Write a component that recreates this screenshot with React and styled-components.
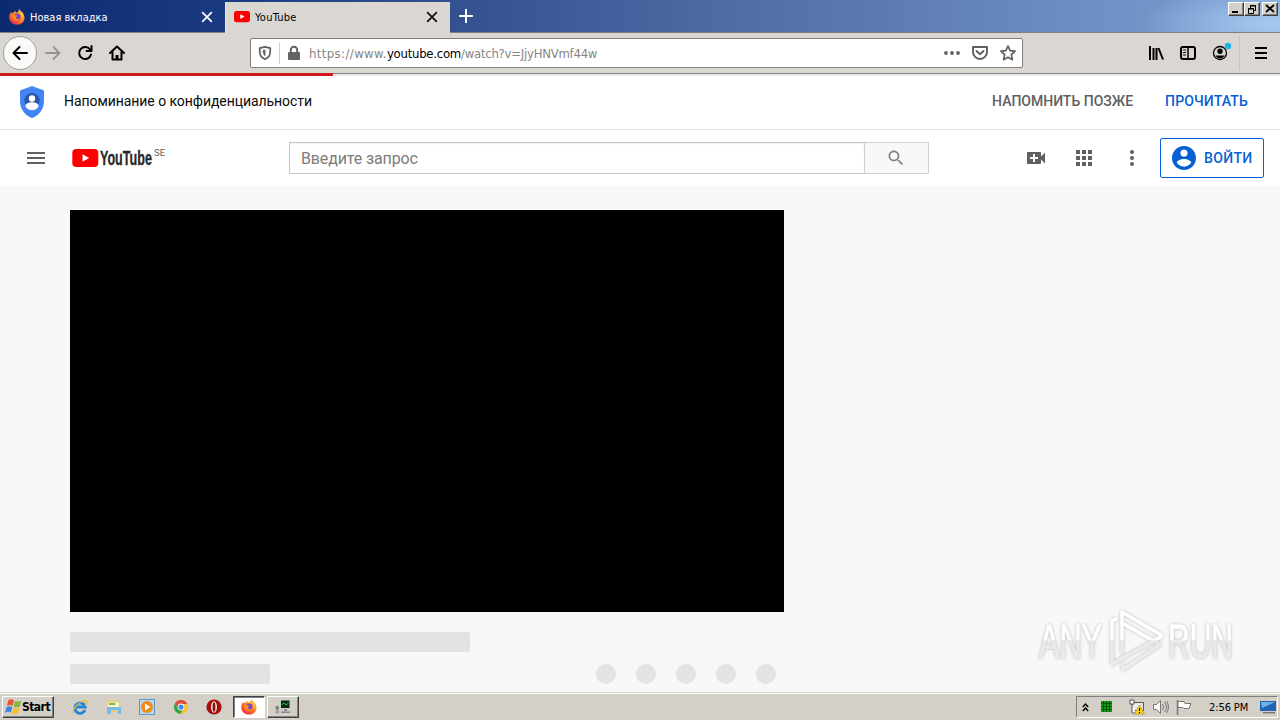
import React from 'react';
import styled, { createGlobalStyle } from 'styled-components';

const GlobalStyle = createGlobalStyle`
    * {
        box-sizing: border-box;
    }
    body {
        margin: 0;
        overflow: hidden;
        background-color: #f8f8f8;
    }
    svg {
        display: block;
        flex-shrink: 0;
        overflow: visible;
    }
`;

const Screen = styled.div`
    width: 1280px;
    height: 720px;
    display: flex;
    flex-direction: column;
    position: relative;
    overflow: hidden;
    font-family: Roboto, "Liberation Sans", sans-serif;
    white-space: nowrap;
`;

/* browser chrome */

const TabStrip = styled.div`
    height: 33px;
    display: flex;
    flex-shrink: 0;
    align-items: flex-end;
    background: radial-gradient(ellipse 130px 40px at 1270px 24px, #a5c9ee, transparent),
        linear-gradient(90deg, #0c2a70 0, #1a3a82 225px, #33508f 450px, #5673ab 800px, #6a8cc2 1060px, #7ba0d2 1280px);
    border-bottom: 1px solid #80807f;
`;

const Tab = styled.div`
    width: ${props => props.$width};
    height: ${props => props.$active ? "31px" : "32px"};
    margin-bottom: ${props => props.$active ? "-1px" : "0"};
    padding: ${props => props.$active ? "0 13px 1px 8px" : "2px 13px 0 9px"};
    display: flex;
    align-items: center;
    gap: 5px;
    color: ${props => props.$active ? "#000" : "#fff"};
    background-color: ${props => props.$active ? "#dad7d2" : "transparent"};
    border-left: ${props => props.$active ? "1px solid #e9e7e3" : "none"};
`;

const TabTitle = styled.span`
    flex: 1;
    font: 11px "DejaVu Sans Condensed", "DejaVu Sans", sans-serif;
    letter-spacing: ${props => props.$spacing};
`;

const NewTab = styled.div`
    height: 32px;
    padding: 0 9px;
    display: flex;
    align-items: center;
`;

const WindowButtons = styled.div`
    height: 32px;
    margin-left: auto;
    padding: 2px 2px 0 0;
    display: flex;
`;

const WindowButton = styled.div`
    width: 16px;
    height: 14px;
    margin-left: ${props => props.$gap || "0"};
    display: flex;
    align-items: center;
    justify-content: center;
    background-color: #d4d0c8;
    border: 1px solid;
    border-color: #fff #404040 #404040 #fff;
    box-shadow: inset -1px -1px #808080;
`;

const NavBar = styled.div`
    height: 41px;
    display: flex;
    flex-shrink: 0;
    align-items: center;
    background-color: #dad7d2;
    border-bottom: 1px solid #8b8985;
`;

const BackButton = styled.div`
    width: 34px;
    height: 34px;
    margin-left: 3px;
    display: flex;
    align-items: center;
    justify-content: center;
    background-color: #f9f9f8;
    border: 1px solid #a19f9b;
    border-radius: 50%;
`;

const NavIcon = styled.div`
    width: 32px;
    display: flex;
    justify-content: center;
    position: relative;
`;

const UrlBar = styled.div`
    width: 773px;
    height: 30px;
    margin-left: 117px;
    padding: 0 6px 0 7px;
    display: flex;
    align-items: center;
    background-color: #fff;
    border: 1px solid #82807d;
    border-radius: 2px;
`;

const UrlDivider = styled.div`
    width: 1px;
    height: 22px;
    margin: 0 7px;
    background-color: #cfcfcf;
`;

const Url = styled.span`
    flex: 1;
    margin-left: 8px;
    color: #858585;
    font: 13px "DejaVu Sans Condensed", "DejaVu Sans", sans-serif;
    font-weight: 200;
    letter-spacing: -0.25px;

    b {
        color: #000;
        font-weight: 400;
        letter-spacing: -0.25px;
    }
`;

const UrlScheme = styled.span`
    letter-spacing: 0.4px;
`;

const UrlActions = styled.div`
    display: flex;
    align-items: center;
    gap: 12px;
`;

const NavTools = styled.div`
    margin-left: auto;
    padding-right: 3px;
    display: flex;
    align-items: center;
`;

const ToolDivider = styled.div`
    width: 1px;
    height: 34px;
    margin: 0 5px 0 3px;
    background-color: #c9c5be;
`;

/* page */

const Progress = styled.div`
    height: 2px;
    flex-shrink: 0;
    background-color: #ebe9e5;
`;

const ProgressFill = styled.div`
    width: 333px;
    height: 3px;
    margin-top: -1px;
    position: relative;
    background-color: #cf1a1c;
`;

const Privacy = styled.div`
    height: 54px;
    padding: 0 32px 2px 20px;
    display: flex;
    flex-shrink: 0;
    align-items: center;
    background-color: #fff;
    border-bottom: 1px solid #e2e2e2;
`;

const PrivacyText = styled.span`
    flex: 1;
    margin-left: 20px;
    padding-bottom: 2px;
    color: #0a0a0a;
    font-size: 14px;
    letter-spacing: -0.06px;
`;

const TextButton = styled.span`
    margin-left: 32px;
    padding-bottom: 2px;
    color: ${props => props.$primary ? "#065fd4" : "#606060"};
    font-size: 14px;
    font-weight: 500;
    letter-spacing: ${props => props.$spacing || "0"};
`;

const Masthead = styled.div`
    height: 56px;
    padding: 0 16px 0 24px;
    display: flex;
    flex-shrink: 0;
    align-items: center;
    background-color: #fff;
`;

const Logo = styled.div`
    width: 94px;
    margin-left: 24px;
`;

const SearchBox = styled.div`
    width: 640px;
    height: 32px;
    margin-left: 123px;
    display: flex;
`;

const SearchField = styled.div`
    flex: 1;
    padding-left: 11px;
    color: #7c7c7c;
    font-size: 16px;
    line-height: 31px;
    letter-spacing: -0.13px;
    border: 1px solid #c6c6c6;
    border-right: none;
    box-shadow: inset 0 1px 2px #eee;
`;

const SearchButton = styled.div`
    width: 65px;
    padding-right: 2px;
    display: flex;
    align-items: center;
    justify-content: center;
    background-color: #f8f8f8;
    border: 1px solid #d0d0d0;
`;

const MastheadTools = styled.div`
    margin-left: auto;
    display: flex;
    align-items: center;
    gap: 24px;
`;

const SignIn = styled.div`
    width: 104px;
    height: 40px;
    margin-left: -8px;
    padding-left: 11px;
    display: flex;
    align-items: center;
    gap: 8px;
    color: #065fd4;
    font-size: 14px;
    font-weight: 500;
    letter-spacing: 0.35px;
    border: 1px solid #065fd4;
    border-radius: 2px;
`;

const Watch = styled.div`
    flex: 1;
    padding: 24px 0 0 70px;
    background-color: #f8f8f8;
`;

const Player = styled.div`
    width: 714px;
    height: 402px;
    background-color: #000;
`;

const SkeletonRow = styled.div`
    width: 706px;
    margin-top: ${props => props.$top};
    display: flex;
    gap: 20px;
`;

const SkeletonBar = styled.div`
    width: ${props => props.$width};
    height: 20px;
    margin-right: auto;
    background-color: #e3e3e3;
    border-radius: 1px;
`;

const SkeletonDot = styled.div`
    width: 20px;
    height: 20px;
    background-color: #e3e3e3;
    border-radius: 50%;
`;

const Watermark = styled.div`
    position: absolute;
    left: 1032px;
    top: 604px;
`;

/* taskbar */

const Taskbar = styled.div`
    height: 28px;
    padding: 2px 2px 1px;
    display: flex;
    flex-shrink: 0;
    align-items: center;
    background-color: #d4d0c8;
    border-top: 1px solid #d4d0c8;
    box-shadow: inset 0 1px #fff;
    color: #000;
    font: 11px "DejaVu Sans Condensed", "DejaVu Sans", sans-serif;
`;

const TaskButton = styled.div`
    width: ${props => props.$width};
    height: 22px;
    margin-right: ${props => props.$gap || "0"};
    display: flex;
    align-items: center;
    justify-content: center;
    font-size: 12px;
    font-weight: 700;
    letter-spacing: -0.5px;
    background-color: ${props => props.$pressed ? "#fff" : "#d4d0c8"};
    border: 1px solid;
    border-color: ${props => props.$pressed ? "#404040 #fff #fff #404040" : "#fff #404040 #404040 #fff"};
    box-shadow: ${props => props.$pressed ? "inset 1px 1px #808080" : "inset -1px -1px #808080"};
`;

const QuickLaunch = styled.div`
    width: 161px;
    margin-left: 18px;
    display: flex;
    gap: 17.5px;
`;

const Tray = styled.div`
    width: 202px;
    height: 22px;
    margin-left: auto;
    padding-left: 5px;
    display: flex;
    align-items: center;
    border: 1px solid;
    border-color: #808080 #fff #fff #808080;
`;

const Clock = styled.span`
    width: 48px;
    margin: 0 3px 0 18px;
    letter-spacing: -0.1px;
`;

const Icon = ({ size = 24, children }) => (
    <svg width={size} height={size} viewBox="0 0 24 24" fill="#606060">{children}</svg>
);

const LineIcon = ({ size = 16, color = "#000", width = 2, children }) => (
    <svg width={size} height={size} viewBox="0 0 16 16" fill="none" stroke={color} strokeWidth={width} strokeLinecap="round" strokeLinejoin="round">
        {children}
    </svg>
);

const Close = ({ color }) => (
    <LineIcon size={10} color={color} width={2.8}><path d="M1 1l14 14M15 1L1 15" /></LineIcon>
);

const FirefoxIcon = () => (
    <svg width="16" height="16" viewBox="0 0 16 16">
        <defs>
            <linearGradient id="fox" x1="1" y1="0" x2="0.2" y2="1">
                <stop offset="0" stopColor="#ffe14a" />
                <stop offset="0.45" stopColor="#ff9026" />
                <stop offset="1" stopColor="#f0234f" />
            </linearGradient>
        </defs>
        <path d="M2 3l1 1.3c.8-.7 1.5-1 2.3-1L6 1.5l1 1.7 2 .3C9 2 10 .8 10.5.2c.4 1.5 2 2 3.1 3.3L14.5 5c1.5 3 1.5 6-.8 8.4a8 8 0 0 1-11.4 0C-.5 10.400-.2 6 2 3z" fill="url(#fox)" />
        <circle cx="8.200" cy="7.800" r="3.300" fill="#7a45cf" />
        <path d="M3.200 6c1.600-.7 3-.3 4 .5h1.500c-.3 1-1.500 1.200-2 2 .4 1.500 2.200 2.200 4 1.200-.9 2.100-4.700 3.100-6.500.8C3.200 9.400 2.800 7.600 3.200 6z" fill="#ff8a1e" />
        <path d="M10 3.500c2.500 1.500 3.300 4 2.400 6.500 1.500-1 1.600-4 .4-5.600z" fill="#ffd23e" />
    </svg>
);

const YouTubeMark = ({ width = 16 }) => (
    <svg width={width} height={width * 0.7} viewBox="0 0 26 18.200">
        <rect width="26" height="18.200" rx="4.200" fill="#f00" />
        <path d="M10.300 5.200v7.800l6.800-3.900z" fill="#fff" />
    </svg>
);

const YouTubeLogo = () => (
    <svg width="94" height="20" viewBox="0 0 94 20">
        <rect x="0.300" y="1" width="26" height="18" rx="4" fill="#f00" />
        <path d="M10.500 6.200v7.600l6.700-3.800z" fill="#fff" />
        <text transform="translate(28 16.500) scale(0.645 1)" fill="#282828" stroke="#282828" strokeWidth="0.300" fontFamily="Liberation Sans, sans-serif" fontWeight="700" fontSize="19.500">YouTube</text>
        <text x="82" y="8" fill="#606060" fontFamily="Roboto, sans-serif" fontSize="9.500">SE</text>
    </svg>
);

const ShieldIcon = () => (
    <svg width="24" height="32" viewBox="0 0 24 32">
        <path d="M12 0l12 4.500V15c0 8-5 14.500-12 17C5 29.500 0 23 0 15V4.500z" fill="#4384f5" />
        <circle cx="12" cy="14.500" r="7.600" fill="#2a57aa" />
        <circle cx="12" cy="12.500" r="3.200" fill="#fff" />
        <path d="M5.500 20.500c0-3 3.200-4.200 6.500-4.200s6.500 1.200 6.500 4.200C17 23 15 24.200 12 24.200S7 23 5.500 20.500z" fill="#fff" />
    </svg>
);

const WatermarkLogo = () => (
    <svg width="206" height="74" viewBox="0 0 206 74">
        <defs>
            <linearGradient id="fade" gradientUnits="userSpaceOnUse" x1="0" y1="0" x2="0" y2="74">
                <stop offset="0.48" stopColor="#fff" />
                <stop offset="0.5" stopColor="#e8e8e8" />
                <stop offset="1" stopColor="#eeeeee" />
            </linearGradient>
            <filter id="glow" x="-10%" y="-20%" width="120%" height="140%">
                <feDropShadow dx="0" dy="0" stdDeviation="1.500" floodColor="#999" floodOpacity="0.7" />
            </filter>
        </defs>
        <g filter="url(#glow)" fill="url(#fade)" fontFamily="Liberation Sans, sans-serif" fontSize="49">
            <g stroke="url(#fade)" strokeWidth="0.800">
                <text x="7" y="53.500" textLength="63" lengthAdjust="spacingAndGlyphs">ANY</text>
                <text x="136" y="53.500" textLength="65" lengthAdjust="spacingAndGlyphs">RUN</text>
            </g>
            <g fill="none" stroke="url(#fade)" strokeWidth="3.500" strokeLinejoin="round" strokeLinecap="round">
                <path d="M90 48V8l40 23.500-4 3" />
                <path d="M84 15l-4 2v43l46-25.500" />
                <path d="M90 19l38 21.500L91 65.500v-5" />
            </g>
        </g>
    </svg>
);

const App = () => {
    return (
        <Screen>
            <GlobalStyle />
            <TabStrip>
                <Tab $width="225px">
                    <FirefoxIcon />
                    <TabTitle $spacing="0px">Новая вкладка</TabTitle>
                    <Close color="#fff" />
                </Tab>
                <Tab $active $width="225px">
                    <YouTubeMark />
                    <TabTitle $spacing="0.25px">YouTube</TabTitle>
                    <Close color="#111" />
                </Tab>
                <NewTab>
                    <LineIcon size={14} color="#fff" width={2.3}><path d="M8 1v14M1 8h14" /></LineIcon>
                </NewTab>
                <WindowButtons>
                    <WindowButton>
                        <svg width="8" height="8"><path d="M0 6h6v2H0z" /></svg>
                    </WindowButton>
                    <WindowButton>
                        <svg width="9" height="9" fill="none" stroke="#000"><path d="M2.500 3V.5h5v5H6M2 1h6M.5 3.500h5v5h-5zM0 4h6" /></svg>
                    </WindowButton>
                    <WindowButton $gap="2px">
                        <svg width="8" height="8" stroke="#000" strokeWidth="1.700"><path d="M0 0l8 7M8 0L0 7" /></svg>
                    </WindowButton>
                </WindowButtons>
            </TabStrip>

            <NavBar>
                <BackButton>
                    <LineIcon><path d="M15 8H1.500M7.500 2l-6 6 6 6" /></LineIcon>
                </BackButton>
                <NavIcon>
                    <LineIcon color="#979591" width={1.8}><path d="M1 8h13.500M8.500 2l6 6-6 6" /></LineIcon>
                </NavIcon>
                <NavIcon>
                    <LineIcon><path d="M13 4.500a6 6 0 1 0 1 5M14.500 1v5h-5" /></LineIcon>
                </NavIcon>
                <NavIcon>
                    <LineIcon><path d="M1 8l7-6.500L15 8M3.500 7v7.500h9V7" /><path d="M8 14v-4" strokeWidth="3" strokeLinecap="butt" /></LineIcon>
                </NavIcon>
                <UrlBar>
                    <LineIcon size={14} color="#5f5f5f"><path d="M8 1l6 1.500v4c0 4-2.500 7-6 8.500-3.500-1.500-6-4.500-6-8.500v-4z" /><path d="M8 5v6C6.500 9.500 5.800 8 5.800 5.500z" fill="#5f5f5f" strokeWidth="1" /></LineIcon>
                    <UrlDivider />
                    <svg width="14" height="16" viewBox="0 0 14 16"><rect x="1" y="7" width="12" height="8" rx="1" fill="#636363" /><path d="M3.800 8V5a3.200 3.200 0 0 1 6.400 0v3" fill="none" stroke="#636363" strokeWidth="2" /></svg>
                    <Url><UrlScheme>https://www.</UrlScheme><b>youtube.com</b>/watch?v=JjyHNVmf44w</Url>
                    <UrlActions>
                        <svg width="16" height="4" fill="#5f5f5f"><circle cx="2" cy="2" r="1.900" /><circle cx="8" cy="2" r="1.900" /><circle cx="14" cy="2" r="1.900" /></svg>
                        <LineIcon color="#5f5f5f" width={1.9}><path d="M1 2h14v5a7 7 0 0 1-14 0zM4.500 6L8 9.300 11.500 6" /></LineIcon>
                        <LineIcon color="#5f5f5f" width={1.7}><path d="M8 1l2.100 4.600 5 .6-3.700 3.500 1 5L8 12.200l-4.400 2.500 1-5L.9 6.200l5-.6z" /></LineIcon>
                    </UrlActions>
                </UrlBar>
                <NavTools>
                    <NavIcon>
                        <svg width="16" height="16" fill="none" stroke="#000" strokeWidth="2"><path d="M2 1v14M5.500 3v12M8.500 3v12M10.500 3l4.500 11.500" /></svg>
                    </NavIcon>
                    <NavIcon>
                        <LineIcon><rect x="1" y="2" width="14" height="12" rx="2" /><path d="M8 2v12" strokeWidth="1.500" /><path d="M3.500 5h2M3.500 7.500h2M3.500 10h2" strokeWidth="1" /></LineIcon>
                    </NavIcon>
                    <NavIcon>
                        <svg width="16" height="16">
                            <circle cx="8" cy="8" r="6.500" fill="none" stroke="#000" strokeWidth="1.300" />
                            <circle cx="8" cy="6.300" r="2.700" />
                            <path d="M3.500 10.500h9c-1 2-2.500 3-4.500 3s-3.500-1-4.500-3z" />
                            <circle cx="16" cy="1" r="3.200" fill="#18b4e8" />
                        </svg>
                    </NavIcon>
                    <ToolDivider />
                    <NavIcon>
                        <svg width="12" height="12"><path d="M0 0h12v2H0zM0 5h12v2H0zM0 10h12v2H0z" /></svg>
                    </NavIcon>
                </NavTools>
            </NavBar>

            <Progress><ProgressFill /></Progress>
            <Privacy>
                <ShieldIcon />
                <PrivacyText>Напоминание о конфиденциальности</PrivacyText>
                <TextButton>НАПОМНИТЬ ПОЗЖЕ</TextButton>
                <TextButton $primary $spacing="0.15px">ПРОЧИТАТЬ</TextButton>
            </Privacy>

            <Masthead>
                <Icon><path d="M3 18h18v-2H3v2zm0-5h18v-2H3v2zm0-7v2h18V6H3z" /></Icon>
                <Logo><YouTubeLogo /></Logo>
                <SearchBox>
                    <SearchField>Введите запрос</SearchField>
                    <SearchButton>
                        <Icon size={20}><path fill="#858585" d="M15.500 14h-.79l-.28-.27C15.410 12.590 16 11.110 16 9.500 16 5.910 13.090 3 9.500 3S3 5.910 3 9.500 5.910 16 9.500 16c1.610 0 3.090-.59 4.230-1.570l.27.28v.79l5 4.990L20.490 19l-4.990-5zm-6 0C7.010 14 5 11.990 5 9.500S7.010 5 9.500 5 14 7.010 14 9.500 11.990 14 9.500 14z" /></Icon>
                    </SearchButton>
                </SearchBox>
                <MastheadTools>
                    <Icon><path d="M17 10.500V7c0-.55-.45-1-1-1H4c-.55 0-1 .45-1 1v10c0 .55.450 1 1 1h12c.55 0 1-.45 1-1v-3.500l4 4v-11l-4 4zM14 13h-3v3H9v-3H6v-2h3V8h2v3h3v2z" /></Icon>
                    <Icon><path d="M4 4h4v4H4zM10 4h4v4h-4zM16 4h4v4h-4zM4 10h4v4H4zM10 10h4v4h-4zM16 10h4v4h-4zM4 16h4v4H4zM10 16h4v4h-4zM16 16h4v4h-4z" /></Icon>
                    <Icon><circle cx="12" cy="6" r="2" /><circle cx="12" cy="12" r="2" /><circle cx="12" cy="18" r="2" /></Icon>
                    <SignIn>
                        <svg width="24" height="24" viewBox="2 2 20 20" fill="#065fd4"><path d="M12 2C6.480 2 2 6.480 2 12s4.480 10 10 10 10-4.480 10-10S17.520 2 12 2zm0 3c1.660 0 3 1.340 3 3s-1.340 3-3 3-3-1.340-3-3 1.340-3 3-3zm0 14.200c-2.500 0-4.710-1.280-6-3.220.03-1.990 4-3.080 6-3.080 1.990 0 5.970 1.090 6 3.080-1.290 1.940-3.500 3.220-6 3.220z" /></svg>
                        ВОЙТИ
                    </SignIn>
                </MastheadTools>
            </Masthead>

            <Watch>
                <Player />
                <SkeletonRow $top="20px"><SkeletonBar $width="400px" /></SkeletonRow>
                <SkeletonRow $top="12px">
                    <SkeletonBar $width="200px" />
                    {[1, 2, 3, 4, 5].map((item) => <SkeletonDot key={item} />)}
                </SkeletonRow>
            </Watch>
            <Watermark><WatermarkLogo /></Watermark>

            <Taskbar>
                <TaskButton $width="52px">
                    <svg width="16" height="16" viewBox="1 1 14 14">
                        <path d="M3 2c2-1.300 3.500-1 5 0L6.800 7c-1.600-1-3-1-5 0z" fill="#e8562a" />
                        <path d="M9 2.500c2 1 3.500 1 5.500 0L13 7.500c-2 1-3.500 1-5.200 0z" fill="#7fb83c" />
                        <path d="M1.500 8c2-1 3.500-1 5 0l-1.300 5c-1.700-1-3-1-5 0z" fill="#3f87d6" />
                        <path d="M7.500 8.500c2 1 3.500 1 5.300 0l-1.400 5c-2 1-3.500 1-5.200 0z" fill="#f8be2c" />
                    </svg>
                    Start
                </TaskButton>
                <QuickLaunch>
                    <svg width="16" height="16" viewBox="0 0 16 16" fill="none">
                        <path d="M13 11A5.200 5.200 0 1 1 13.200 8H4" stroke="#2185d8" strokeWidth="2.800" />
                        <path d="M1.500 14.500C-1 11 8 1 14 1.500c2 .5 0 4-1 5" stroke="#efb82d" strokeWidth="1.200" />
                    </svg>
                    <svg width="16" height="16" viewBox="0 0 16 16">
                        <path d="M1 1h6l1 1.500h6V13H1z" fill="#eed06b" />
                        <path d="M2 3.500h11V8H2z" fill="#fff3ba" />
                        <path d="M1 8h14v7h-3v-4H5v4H1z" fill="#77bce5" />
                        <path d="M3 6V4h6v2z" fill="#76b56d" />
                    </svg>
                    <svg width="16" height="16" viewBox="0 0 16 16">
                        <rect x=".5" y=".5" width="15" height="15" fill="#b8d8f1" stroke="#5c98cb" />
                        <circle cx="8" cy="8" r="6" fill="#f18a19" />
                        <path d="M6 4.500v7l5.500-3.500z" fill="#fff" />
                    </svg>
                    <svg width="16" height="16" viewBox="0 0 16 16">
                        <circle cx="8" cy="8" r="7" fill="#f4c430" />
                        <path d="M2 4.300a7 7 0 0 1 12.200.7H8L5 9z" fill="#dd4b3e" />
                        <path d="M2 4.300A7 7 0 0 0 7.500 15l3-5.500-5.500 0z" fill="#31a552" />
                        <circle cx="8" cy="8" r="3.400" fill="#fff" />
                        <circle cx="8" cy="8" r="2.600" fill="#4586ed" />
                    </svg>
                    <svg width="16" height="16" viewBox="0 0 16 16">
                        <circle cx="8" cy="8" r="7.600" fill="#a5100f" />
                        <ellipse cx="8" cy="8" rx="3" ry="5.800" fill="#f0e4e0" />
                        <ellipse cx="8" cy="8" rx="1.400" ry="4.800" fill="#8b1010" />
                    </svg>
                </QuickLaunch>
                <TaskButton $pressed $width="32px" $gap="2px"><FirefoxIcon /></TaskButton>
                <TaskButton $width="32px">
                    <svg width="16" height="16" viewBox="0 0 16 16">
                        <path d="M5 1h10v9H5z" fill="#c8cac4" />
                        <path d="M6 1.500h8.500V9H6z" fill="#092b13" />
                        <path d="M6.500 6l2.500-2 2 2 2.500-2" fill="none" stroke="#38b45b" />
                        <path d="M9 10h3v2H9zM6 12.500h9V14H6z" fill="#888" />
                        <path d="M1 7h2.500v7H1z" fill="#b4b4b0" stroke="#777" strokeWidth=".5" />
                        <path d="M1.500 8h1.500v2H1.500z" fill="#238238" />
                    </svg>
                </TaskButton>
                <Tray>
                    <svg width="7" height="9" fill="none" stroke="#000" strokeWidth="1.400"><path d="M.8 4l2.700-3 2.700 3M.8 8l2.700-3 2.700 3" /></svg>
                    <svg width="43" height="16" viewBox="0 0 43 16">
                        <path d="M12 2h11v11H12z" fill="#129d16" />
                        <path d="M14.500 2v11M17.500 2v11M20.500 2v11M12 4.500h11M12 7.500h11M12 10.500h11" stroke="#07560a" />
                    </svg>
                    <svg width="16" height="16" viewBox="0 0 16 16" transform="translate(-3 0)">
                        <path d="M3.500 3.500h11v8h-11z" fill="#e9e9e5" stroke="#555" />
                        <path d="M1 1h4v4H1zM3 5v9h4" fill="#fff" stroke="#555" />
                        <path d="M10.500 6l5 9h-10z" fill="#ffd51f" stroke="#a88a16" strokeWidth=".6" />
                        <path d="M10.500 9v3M10.500 13v1" stroke="#000" strokeWidth="1.200" />
                    </svg>
                    <svg width="16" height="16" viewBox="0 0 16 16" transform="translate(5 0)" fill="none" stroke="#777">
                        <path d="M.5 5.500h3l4-4v13l-4-4h-3z" fill="#f8f8f8" />
                        <path d="M9.500 5q2 3 0 6M11.500 3q4 5 0 10M13.500 2q4 6 0 12" />
                    </svg>
                    <svg width="27" height="16" viewBox="0 0 27 16" fill="none" stroke="#777">
                        <path d="M13.500 1v15" strokeWidth="1.500" />
                        <path d="M14 2.500h6l1 2h6l-2 5h-5l-1-1h-5z" fill="#fff" />
                    </svg>
                    <Clock>2:56 PM</Clock>
                    <svg width="16" height="13" viewBox="0 0 16 13">
                        <path d="M0 0h16v10H0z" fill="#2363b5" />
                        <path d="M1 1h14L2 7z" fill="#70b1e8" />
                        <path d="M3 11h12v1.500H3z" fill="#777" />
                    </svg>
                </Tray>
            </Taskbar>
        </Screen>
    );
};

export default App;
